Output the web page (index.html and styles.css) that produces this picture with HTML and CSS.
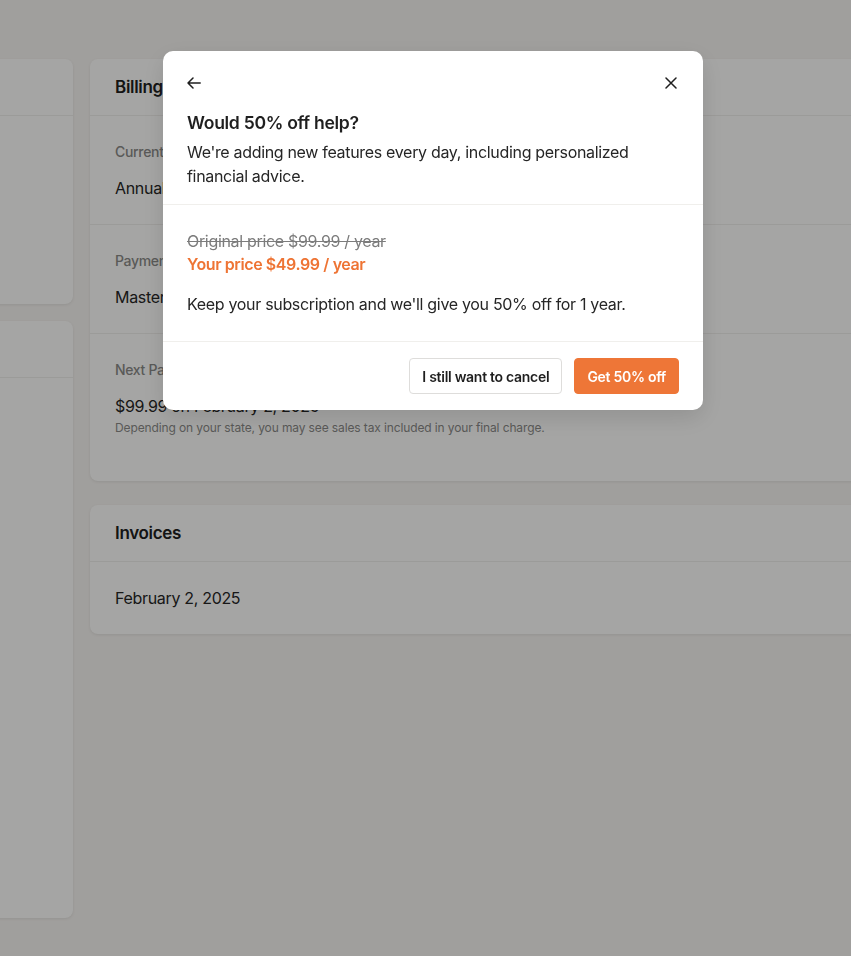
FILE: index.html
```html
<!DOCTYPE html>
<html lang="en">
<head>
<meta charset="utf-8">
<title>Billing</title>
<link rel="stylesheet" href="styles.css">
</head>
<body>
<div class="page">
  <aside class="side">
    <div class="card side-card-a">
      <div class="card-head"><span class="card-title">Account</span></div>
    </div>
    <div class="card side-card-b">
      <div class="card-head"><span class="card-title">Settings</span></div>
    </div>
  </aside>
  <main class="main">
    <section class="card">
      <div class="card-head"><span class="card-title">Billing details</span></div>
      <div class="row">
        <div class="label">Current plan</div>
        <div class="value">Annual plan</div>
      </div>
      <div class="row">
        <div class="label">Payment method</div>
        <div class="value">Mastercard ending in 4242</div>
      </div>
      <div class="row row-last">
        <div class="label">Next Payment</div>
        <div class="value">$99.99 on February 2, 2025</div>
        <div class="note">Depending on your state, you may see sales tax included in your final charge.</div>
      </div>
    </section>
    <section class="card invoices">
      <div class="card-head"><span class="card-title">Invoices</span></div>
      <div class="invoice-row">February 2, 2025</div>
    </section>
  </main>
</div>

<div class="overlay"></div>

<div class="modal" role="dialog">
  <div class="modal-top">
    <div class="icon-row">
      <button class="icon-btn" aria-label="Back">
        <svg width="14" height="12" viewBox="0 0 14 12" fill="none" stroke="#1f1f1f" stroke-width="1.5" stroke-linecap="round" stroke-linejoin="round"><path d="M13.2 6H1M6 1L1 6l5 5"/></svg>
      </button>
      <button class="icon-btn" aria-label="Close">
        <svg width="12" height="12" viewBox="0 0 12 12" fill="none" stroke="#1f1f1f" stroke-width="1.5" stroke-linecap="round"><path d="M1 1l10 10M11 1L1 11"/></svg>
      </button>
    </div>
    <h2 class="modal-title">Would 50% off help?</h2>
    <p class="modal-text">We're adding new features every day, including personalized financial advice.</p>
  </div>
  <div class="modal-mid">
    <div class="old-price">Original price $99.99 / year</div>
    <div class="new-price">Your price $49.99 / year</div>
    <p class="keep">Keep your subscription and we'll give you 50% off for 1 year.</p>
  </div>
  <div class="modal-foot">
    <button class="btn btn-ghost">I still want to cancel</button>
    <button class="btn btn-primary">Get 50% off</button>
  </div>
</div>
</body>
</html>
```

FILE: styles.css
```css
* { box-sizing: border-box; }

html, body {
  margin: 0;
  padding: 0;
  height: 100%;
}

body {
  background: #f6f4f1;
  font-family: Inter, "Noto Sans", "Liberation Sans", sans-serif;
  letter-spacing: -0.02em;
  color: #1f1f1f;
  overflow: hidden;
}

.page {
  display: grid;
  grid-template-columns: 240px 900px;
  gap: 17px;
  padding-top: 59px;
  margin-left: -167px;
}

.side {
  display: flex;
  flex-direction: column;
  gap: 17px;
}

.card {
  background: #fefefc;
  border-radius: 8px;
  box-shadow: 0 1px 3px rgba(0, 0, 0, 0.08);
}

.side-card-a { height: 245px; }
.side-card-b { height: 597px; }

.card-head {
  height: 57px;
  padding: 0 25px;
  display: flex;
  align-items: center;
  border-bottom: 1px solid #efeeeb;
}

.card-title {
  font-size: 17px;
  font-weight: 600;
  color: #202020;
}

.side .card-title { visibility: hidden; }

.main {
  display: flex;
  flex-direction: column;
  gap: 24px;
}

.row {
  padding: 26px 25px 24px;
  border-bottom: 1px solid #efeeeb;
}

.row-last {
  border-bottom: none;
  padding-bottom: 45px;
}

.label {
  font-size: 14px;
  line-height: 20px;
  font-weight: 500;
  color: #8a8a88;
  margin-bottom: 14px;
}

.value {
  font-size: 16px;
  line-height: 24px;
  color: #262626;
}

.note {
  font-size: 12px;
  line-height: 16px;
  letter-spacing: -0.01em;
  color: #8a8a88;
  margin-top: 2px;
}

.invoice-row {
  padding: 24px 25px;
  font-size: 16px;
  line-height: 24px;
  color: #262626;
}

.overlay {
  position: fixed;
  inset: 0;
  background: rgba(0, 0, 0, 0.35);
}

.modal {
  position: fixed;
  left: 163px;
  top: 51px;
  width: 540px;
  background: #ffffff;
  border-radius: 10px;
  box-shadow: 0 8px 24px rgba(0, 0, 0, 0.12);
}

.modal-top {
  padding: 24px 26px 16px 24px;
  border-bottom: 1px solid #f0efec;
}

.icon-row {
  display: flex;
  justify-content: space-between;
  align-items: center;
  height: 16px;
  margin-bottom: 20px;
}

.icon-btn {
  background: none;
  border: 0;
  padding: 0;
  display: flex;
  align-items: center;
  cursor: pointer;
}

.modal-title {
  margin: 0 0 5px;
  font-size: 17.6px;
  line-height: 24px;
  font-weight: 600;
  color: #1f1f1f;
}

.modal-text {
  margin: 0;
  font-size: 16px;
  line-height: 24px;
  color: #262626;
}

.modal-mid {
  padding: 25px 24px 25px;
  border-bottom: 1px solid #f0efec;
}

.old-price {
  font-size: 16px;
  line-height: 23px;
  color: #7c7c7c;
  text-decoration: line-through;
}

.new-price {
  font-size: 16px;
  line-height: 23px;
  font-weight: 600;
  letter-spacing: -0.025em;
  color: #ee7434;
}

.keep {
  margin: 16px 0 0;
  font-size: 16px;
  line-height: 24px;
  color: #262626;
}

.modal-foot {
  padding: 16px 24px;
  display: flex;
  justify-content: flex-end;
  gap: 12px;
}

.btn {
  height: 36px;
  padding: 0 12px;
  border-radius: 4px;
  font-family: inherit;
  letter-spacing: -0.02em;
  font-size: 14px;
  font-weight: 600;
  cursor: pointer;
}

.btn-ghost {
  background: #ffffff;
  border: 1px solid #dedddb;
  color: #1f1f1f;
}

.btn-primary {
  background: #ee7637;
  border: 1px solid #ee7637;
  color: #ffffff;
}
```
